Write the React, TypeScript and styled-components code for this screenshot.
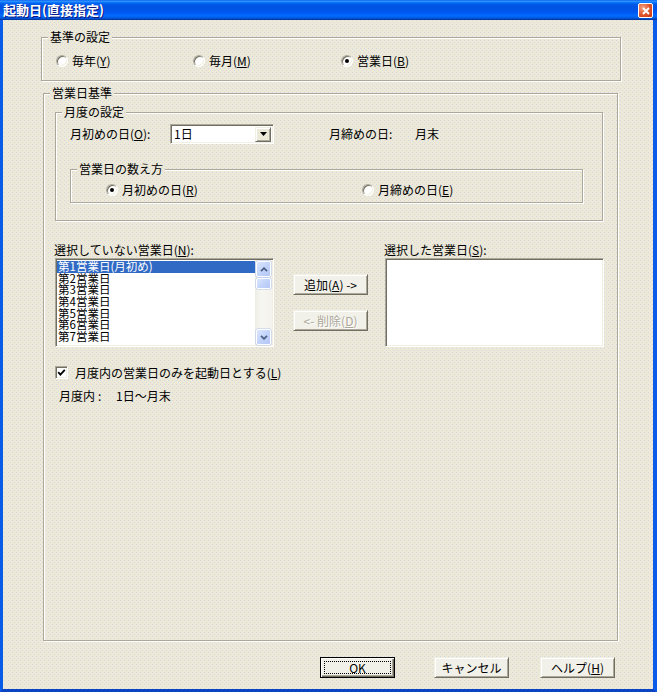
import React from "react";
import styled, { createGlobalStyle, css } from "styled-components";

const GlobalStyle = createGlobalStyle`
  html, body { margin: 0; padding: 0; background: #ffffff; }
  body {
    font-family: "Noto Sans CJK JP", "Noto Sans", sans-serif;
    font-size: 12px;
    color: #000;
  }
  u { text-underline-offset: 1px; }
`;

const dotted = css`
  background-color: #ece9d8;
  background-image:
    conic-gradient(at 1px 1px, transparent 270deg, #d4d5e0 0),
    conic-gradient(at 1px 1px, transparent 270deg, #dadae0 0);
  background-size: 4px 4px, 4px 4px;
  background-position: 0 0, 2px 2px;
  background-attachment: fixed;
`;

const sunken = css`
  border: 1px solid;
  border-color: #aca899 #ffffff #ffffff #aca899;
  box-shadow: inset 1px 1px 0 #716f64, inset -1px -1px 0 #f1efe2;
  background: #ffffff;
`;

const Window = styled.div`
  width: 657px;
  height: 692px;
  display: flex;
  flex-direction: column;
  overflow: hidden;
`;

const TitleBar = styled.div`
  height: 20px;
  flex: none;
  display: flex;
  align-items: center;
  justify-content: space-between;
  padding: 0 4px 0 3px;
  background: linear-gradient(
    to bottom,
    #0058ee 0%,
    #3593ff 5%,
    #288eff 8%,
    #127dff 11%,
    #036ffc 14%,
    #0262ee 18%,
    #0057e5 24%,
    #0054e3 30%,
    #0055eb 56%,
    #005bf5 66%,
    #026afe 76%,
    #0062ef 86%,
    #0052d6 92%,
    #0040ab 96%,
    #003092 100%
  );
`;

const TitleText = styled.span`
  color: #ffffff;
  font-weight: bold;
  font-size: 13px;
  line-height: 14px;
  text-shadow: 1px 1px 0 #0a1883;
  white-space: nowrap;
`;

const CloseBox = styled.div`
  box-sizing: border-box;
  width: 15px;
  height: 15px;
  margin-top: 1px;
  border: 1px solid #ffffff;
  border-radius: 2px;
  background: radial-gradient(circle at 30% 30%, #f3a082 0%, #e0532a 55%, #c23510 100%);
  display: flex;
  align-items: center;
  justify-content: center;
`;

const Frame = styled.div`
  flex: 1;
  display: flex;
  flex-direction: column;
  border-left: 3px solid #0b5be9;
  border-right: 4px solid #0b5be9;
  border-bottom: 3px solid #0a44c2;
  padding: 17px 0 0 38px;
  ${dotted}
`;

const Group = styled.div`
  box-sizing: border-box;
  flex: none;
  display: flex;
  flex-direction: column;
  border: 1px solid #aca899;
  box-shadow: 1px 1px 0 #ffffff, inset 1px 1px 0 #ffffff;
`;

const TopGroup = styled(Group)`
  width: 580px;
  height: 44px;
`;

const BusinessGroup = styled(Group)`
  width: 575px;
  height: 548px;
  margin: 12px 0 0 2px;
`;

const MonthGroup = styled(Group)`
  width: 548px;
  height: 109px;
  margin: 13px 0 0 11px;
`;

const CountGroup = styled(Group)`
  width: 513px;
  height: 34px;
  margin: 25px 0 0 14px;
`;

const Legend = styled.div`
  align-self: flex-start;
  margin: -7px 0 0 6px;
  padding: 0 2px;
  height: 12px;
  line-height: 12px;
  white-space: nowrap;
  ${dotted}
`;

const RadioRow = styled.div<{ $mt: number; $pl: number }>`
  display: flex;
  align-items: center;
  height: 13px;
  margin-top: ${(p) => p.$mt}px;
  padding-left: ${(p) => p.$pl}px;
`;

const RadioItem = styled.label<{ $w?: number }>`
  display: flex;
  align-items: center;
  gap: 4px;
  flex: none;
  width: ${(p) => (p.$w ? `${p.$w}px` : "auto")};
  line-height: 12px;
  white-space: nowrap;
`;

const RadioCircle = styled.span<{ $checked?: boolean }>`
  box-sizing: border-box;
  width: 12px;
  height: 12px;
  flex: none;
  border-radius: 50%;
  ${sunken}
  display: flex;
  align-items: center;
  justify-content: center;
  &::after {
    content: "";
    width: 4px;
    height: 4px;
    border-radius: 50%;
    background: #000;
    display: ${(p) => (p.$checked ? "block" : "none")};
  }
`;

const FieldRow = styled.div`
  display: flex;
  align-items: center;
  height: 20px;
  margin-top: 6px;
  padding-left: 14px;
`;

const FieldLabel = styled.span<{ $w?: number; $ml?: number }>`
  flex: none;
  width: ${(p) => (p.$w ? `${p.$w}px` : "auto")};
  margin-left: ${(p) => p.$ml ?? 0}px;
  line-height: 12px;
  white-space: nowrap;
`;

const Combo = styled.div`
  box-sizing: border-box;
  width: 104px;
  height: 20px;
  flex: none;
  display: flex;
  align-items: center;
  padding: 2px 2px 2px 3px;
  ${sunken}
`;

const ComboText = styled.span`
  flex: 1;
  line-height: 12px;
`;

const raised = css`
  border: 1px solid;
  border-color: #f1efe2 #716f64 #716f64 #f1efe2;
  box-shadow: inset 1px 1px 0 #ffffff, inset -1px -1px 0 #aca899;
`;

const ComboButton = styled.span`
  box-sizing: border-box;
  width: 16px;
  height: 15px;
  flex: none;
  display: flex;
  align-items: center;
  justify-content: center;
  background: #ece9d8;
  ${raised}
`;

const ListsRow = styled.div`
  display: flex;
  align-items: flex-start;
  margin: 23px 0 0 11px;
`;

const ListColumn = styled.div`
  display: flex;
  flex-direction: column;
  gap: 2px;
  flex: none;
`;

const ListLabel = styled.span`
  height: 12px;
  line-height: 12px;
  margin-left: -1px;
  white-space: nowrap;
`;

const ListBox = styled.div`
  box-sizing: border-box;
  width: 219px;
  height: 89px;
  display: flex;
  padding: 1px;
  ${sunken}
`;

const Items = styled.div`
  flex: 1;
  padding-top: 1px;
`;

const Item = styled.div<{ $selected?: boolean }>`
  height: 11.7px;
  font-size: 11.5px;
  line-height: 11.7px;
  padding-left: 1px;
  white-space: nowrap;
  background: ${(p) => (p.$selected ? "#316ac5" : "transparent")};
  color: ${(p) => (p.$selected ? "#ffffff" : "#000000")};
`;

const ScrollTrack = styled.div`
  width: 17px;
  flex: none;
  display: flex;
  flex-direction: column;
  background: linear-gradient(to right, #eeede5 0%, #f7f7f2 40%, #f3f2ec 100%);
`;

const ScrollPart = styled.div<{ $h: number }>`
  box-sizing: border-box;
  height: ${(p) => p.$h}px;
  margin: 1px 1px 0 1px;
  flex: none;
  border: 1px solid #ffffff;
  border-radius: 2px;
  background: linear-gradient(135deg, #dce6fd 0%, #c3d4fb 50%, #b3c7f4 100%);
  box-shadow: 0 0 0 0.5px #b0c3ee;
  display: flex;
  align-items: center;
  justify-content: center;
`;

const ScrollGap = styled.div`
  flex: 1;
`;

const ButtonColumn = styled.div`
  display: flex;
  flex-direction: column;
  gap: 15px;
  padding-top: 30px;
  margin: 0 17px 0 19px;
  flex: none;
`;

const PushButton = styled.button<{ $default?: boolean }>`
  box-sizing: border-box;
  width: 75px;
  height: 21px;
  flex: none;
  padding: 0;
  font: inherit;
  font-size: 12px;
  line-height: 12px;
  color: #000;
  white-space: nowrap;
  background: #f2f1e9;
  display: flex;
  align-items: center;
  justify-content: center;
  ${(p) =>
    p.$default
      ? css`
          border: 1px solid #000;
          box-shadow: inset 1px 1px 0 #ffffff, inset -1px -1px 0 #716f64, inset -2px -2px 0 #aca899;
        `
      : raised}
  &:disabled {
    color: #aca899;
    text-shadow: 1px 1px 0 #ffffff;
  }
`;

const FocusRing = styled.span`
  box-sizing: border-box;
  align-self: stretch;
  flex: 1;
  margin: 3px;
  border: 1px dotted #000;
  display: flex;
  align-items: center;
  justify-content: center;
`;

const CheckRow = styled.label`
  display: flex;
  align-items: center;
  gap: 7px;
  height: 13px;
  margin: 19px 0 0 11px;
  line-height: 12px;
  white-space: nowrap;
`;

const CheckBox = styled.span`
  box-sizing: border-box;
  width: 13px;
  height: 13px;
  flex: none;
  display: flex;
  align-items: center;
  justify-content: center;
  ${sunken}
`;

const RangeRow = styled.div`
  display: flex;
  align-items: center;
  height: 12px;
  margin: 11px 0 0 15px;
  line-height: 12px;
  white-space: nowrap;
`;

const RangeCell = styled.span<{ $w?: number }>`
  flex: none;
  width: ${(p) => (p.$w ? `${p.$w}px` : "auto")};
`;

const Footer = styled.div`
  display: flex;
  justify-content: flex-end;
  margin-top: 16px;
  padding-right: 38px;
`;

const FooterButton = styled(PushButton)<{ $ml: number }>`
  margin-left: ${(p) => p.$ml}px;
`;

const Chevron = ({ up }: { up?: boolean }) => (
  <svg width="8" height="5" viewBox="0 0 8 5">
    <path
      d={up ? "M1 4.2 L4 1.2 L7 4.2" : "M1 0.8 L4 3.8 L7 0.8"}
      fill="none"
      stroke="#4d6185"
      strokeWidth="1.8"
    />
  </svg>
);

const itemsLeft = [
  "第1営業日(月初め)",
  "第2営業日",
  "第3営業日",
  "第4営業日",
  "第5営業日",
  "第6営業日",
  "第7営業日",
];

export default function App() {
  return (
    <>
      <GlobalStyle />
      <Window>
        <TitleBar>
          <TitleText>起動日(直接指定)</TitleText>
          <CloseBox>
            <svg width="8" height="8" viewBox="0 0 8 8">
              <path d="M1 1 L7 7 M7 1 L1 7" stroke="#ffffff" strokeWidth="1.8" />
            </svg>
          </CloseBox>
        </TitleBar>
        <Frame>
          <TopGroup>
            <Legend>基準の設定</Legend>
            <RadioRow $mt={11} $pl={14}>
              <RadioItem $w={137}>
                <RadioCircle />
                <span>
                  毎年(<u>Y</u>)
                </span>
              </RadioItem>
              <RadioItem $w={148}>
                <RadioCircle />
                <span>
                  毎月(<u>M</u>)
                </span>
              </RadioItem>
              <RadioItem>
                <RadioCircle $checked />
                <span>
                  営業日(<u>B</u>)
                </span>
              </RadioItem>
            </RadioRow>
          </TopGroup>

          <BusinessGroup>
            <Legend>営業日基準</Legend>
            <MonthGroup>
              <Legend>月度の設定</Legend>
              <FieldRow>
                <FieldLabel $w={100}>
                  月初めの日(<u>O</u>):
                </FieldLabel>
                <Combo>
                  <ComboText>1日</ComboText>
                  <ComboButton>
                    <svg width="7" height="4" viewBox="0 0 7 4">
                      <path d="M0 0 H7 L3.5 4 Z" fill="#000" />
                    </svg>
                  </ComboButton>
                </Combo>
                <FieldLabel $w={86} $ml={55}>
                  月締めの日:
                </FieldLabel>
                <FieldLabel>月末</FieldLabel>
              </FieldRow>
              <CountGroup>
                <Legend>営業日の数え方</Legend>
                <RadioRow $mt={8} $pl={35}>
                  <RadioItem $w={256}>
                    <RadioCircle $checked />
                    <span>
                      月初めの日(<u>R</u>)
                    </span>
                  </RadioItem>
                  <RadioItem>
                    <RadioCircle />
                    <span>
                      月締めの日(<u>E</u>)
                    </span>
                  </RadioItem>
                </RadioRow>
              </CountGroup>
            </MonthGroup>

            <ListsRow>
              <ListColumn>
                <ListLabel>
                  選択していない営業日(<u>N</u>):
                </ListLabel>
                <ListBox>
                  <Items>
                    {itemsLeft.map((t, i) => (
                      <Item key={t} $selected={i === 0}>
                        {t}
                      </Item>
                    ))}
                  </Items>
                  <ScrollTrack>
                    <ScrollPart $h={16}>
                      <Chevron up />
                    </ScrollPart>
                    <ScrollPart $h={11} />
                    <ScrollGap />
                    <ScrollPart $h={16}>
                      <Chevron />
                    </ScrollPart>
                  </ScrollTrack>
                </ListBox>
              </ListColumn>
              <ButtonColumn>
                <PushButton>
                  追加(<u>A</u>) -&gt;
                </PushButton>
                <PushButton disabled>
                  &lt;- 削除(<u>D</u>)
                </PushButton>
              </ButtonColumn>
              <ListColumn>
                <ListLabel>
                  選択した営業日(<u>S</u>):
                </ListLabel>
                <ListBox />
              </ListColumn>
            </ListsRow>

            <CheckRow>
              <CheckBox>
                <svg width="9" height="9" viewBox="0 0 9 9">
                  <path d="M1.2 4.2 L3.4 6.6 L7.8 1.8" fill="none" stroke="#000" strokeWidth="1.8" />
                </svg>
              </CheckBox>
              <span>
                月度内の営業日のみを起動日とする(<u>L</u>)
              </span>
            </CheckRow>

            <RangeRow>
              <RangeCell $w={39}>月度内</RangeCell>
              <RangeCell $w={18}>:</RangeCell>
              <RangeCell>1日～月末</RangeCell>
            </RangeRow>
          </BusinessGroup>

          <Footer>
            <FooterButton $ml={0} $default>
              <FocusRing>OK</FocusRing>
            </FooterButton>
            <FooterButton $ml={39}>キャンセル</FooterButton>
            <FooterButton $ml={31}>
              ヘルプ(<u>H</u>)
            </FooterButton>
          </Footer>
        </Frame>
      </Window>
    </>
  );
}
